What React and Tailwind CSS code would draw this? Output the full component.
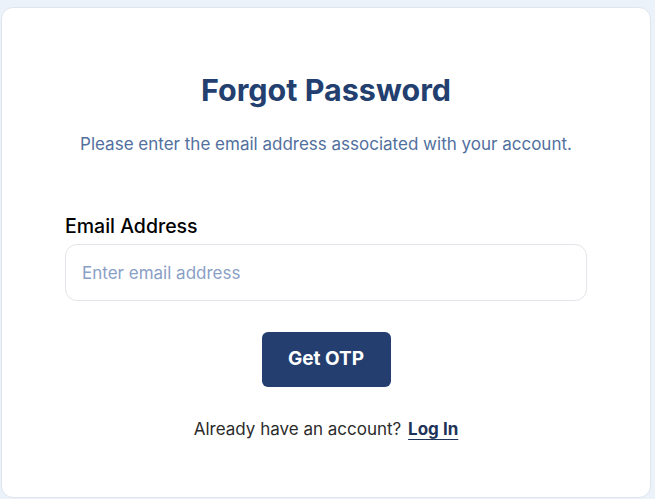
export default function App() {
  return (
    <div
      className="min-h-[499px] w-[655px] bg-[#ebf2fa] pt-[7px] pl-[1px]"
      style={{ fontFamily: "Inter, 'Noto Sans', sans-serif" }}
    >
      <div className="flex h-[491px] w-[650px] flex-col items-center rounded-[12px] border border-[#dfe5ec] bg-white px-[63px]">
        <h1 className="mt-[62px] text-[30.5px] font-bold leading-[40px] text-[#233f70]">
          Forgot Password
        </h1>
        <p className="mt-[21px] text-[17px] leading-[26px] text-[#52709e]">
          Please enter the email address associated with your account.
        </p>

        <div className="mt-[55px] flex w-full flex-col">
          <label className="text-[19.5px] font-medium leading-[28px] text-black">
            Email Address
          </label>
          <input
            type="email"
            placeholder="Enter email address"
            className="mt-[4px] h-[57px] w-full rounded-[12px] border border-[#e2e5ea] px-[16px] text-[17px] text-[#1f2937] outline-none placeholder:text-[#8aa0c6]"
          />
        </div>

        <button className="mt-[31px] h-[55px] w-[129px] rounded-[6px] bg-[#243f6f] text-[19px] font-bold text-white">
          Get OTP
        </button>

        <p className="mt-[30px] text-[17px] leading-[24px] text-[#2b2b2b]">
          Already have an account?{" "}
          <a href="#" className="ml-[2px] font-bold text-[#1f3358] underline underline-offset-[4px]">
            Log In
          </a>
        </p>
      </div>
    </div>
  );
}
